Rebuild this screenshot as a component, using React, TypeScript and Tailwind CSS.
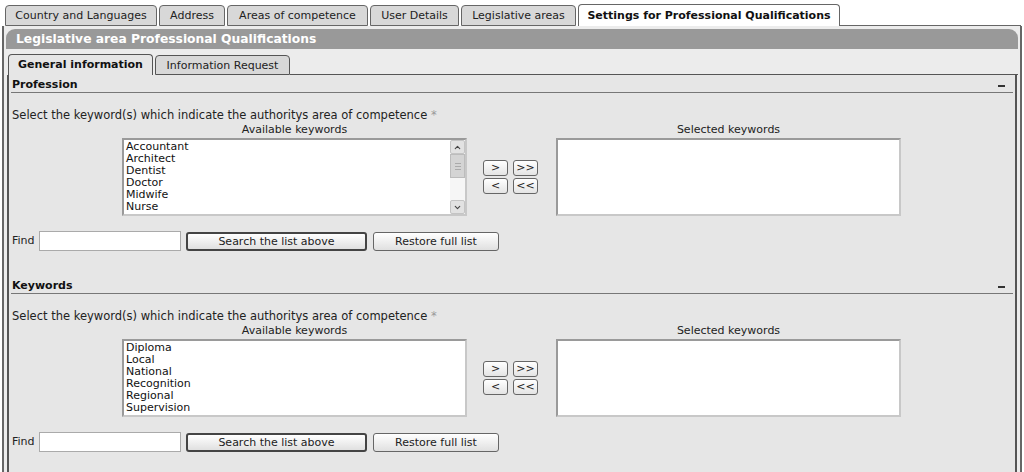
import React from 'react';
import { ChevronUp, ChevronDown } from 'lucide-react';

const topTabs = [
  { label: 'Country and Languages', w: 'w-[152px]' },
  { label: 'Address', w: 'w-[66px]' },
  { label: 'Areas of competence', w: 'w-[141px]' },
  { label: 'User Details', w: 'w-[89px]' },
  { label: 'Legislative areas', w: 'w-[115px]' },
];

function SmallButton({ children }: { children: React.ReactNode }) {
  return (
    <div className="w-[25px] h-[16px] border border-[#666] rounded-[3px] bg-gradient-to-b from-white to-[#e4e4e4] text-[11px] leading-[14px] text-center text-[#222]">
      {children}
    </div>
  );
}

function ListBox({ items, scroll }: { items: string[]; scroll?: boolean }) {
  return (
    <div className="w-[345px] h-[78px] border-2 border-[#9a9a9a] border-r-[#c8c8c8] border-b-[#c8c8c8] bg-white flex">
      <div className="flex-1 pl-[2px] pt-[1px] text-[11px] leading-[12px] text-[#111]">
        {items.map((i) => (
          <div key={i}>{i}</div>
        ))}
      </div>
      {scroll && (
        <div className="w-[15px] flex flex-col bg-[#f6f6f6]">
          <div className="h-[14px] bg-[#e2e2e2] border border-[#c4c4c4] rounded-[2px] flex items-center justify-center text-[#444]">
            <ChevronUp size={9} strokeWidth={3} />
          </div>
          <div className="h-[24px] bg-[#d4d4d4] border border-[#bcbcbc] flex flex-col items-center justify-center gap-[2px]">
            <div className="w-[6px] h-px bg-[#aaa]" />
            <div className="w-[6px] h-px bg-[#aaa]" />
            <div className="w-[6px] h-px bg-[#aaa]" />
          </div>
          <div className="flex-1" />
          <div className="h-[14px] bg-[#e2e2e2] border border-[#c4c4c4] rounded-[2px] flex items-center justify-center text-[#444]">
            <ChevronDown size={9} strokeWidth={3} />
          </div>
        </div>
      )}
    </div>
  );
}

function Section({ title, items, scroll }: { title: string; items: string[]; scroll?: boolean }) {
  return (
    <div>
      <div className="flex justify-between items-center h-[14px] border-b border-[#777] mx-[2px] pl-[1px] pr-[8px] font-bold text-[11px] text-[#111]">
        <span>{title}</span>
        <div className="w-[7px] h-[2px] bg-[#333]" />
      </div>
      <div className="pl-[3px] mt-[15px] h-[14px] text-[11.5px] leading-[14px] text-[#222]">
        Select the keyword(s) which indicate the authoritys area of competence <span className="text-[#999]">*</span>
      </div>
      <div className="flex pl-[113px] mt-px">
        <div className="flex flex-col w-[345px]">
          <div className="h-[15px] text-center text-[11px] leading-[14px] text-[#222]">Available keywords</div>
          <ListBox items={items} scroll={scroll} />
        </div>
        <div className="flex flex-col justify-center gap-[2px] ml-[16px] mt-[15px] w-[56px]">
          <div className="flex gap-[5px]">
            <SmallButton>&gt;</SmallButton>
            <SmallButton>&gt;&gt;</SmallButton>
          </div>
          <div className="flex gap-[5px]">
            <SmallButton>&lt;</SmallButton>
            <SmallButton>&lt;&lt;</SmallButton>
          </div>
        </div>
        <div className="flex flex-col w-[345px] ml-[17px]">
          <div className="h-[15px] text-center text-[11px] leading-[14px] text-[#222]">Selected keywords</div>
          <ListBox items={[]} />
        </div>
      </div>
      <div className="flex items-center mt-[15px] pl-[3px] h-[20px] text-[11px] text-[#222]">
        <span className="w-[27px]">Find</span>
        <div className="w-[142px] h-[20px] bg-white border border-[#aaa]" />
        <div className="ml-[5px] w-[181px] h-[19px] border-2 border-[#444] rounded-[3px] bg-gradient-to-b from-white to-[#e0e0e0] text-center leading-[15px]">
          Search the list above
        </div>
        <div className="ml-[6px] w-[126px] h-[19px] border border-[#666] rounded-[3px] bg-gradient-to-b from-white to-[#e0e0e0] text-center leading-[17px]">
          Restore full list
        </div>
      </div>
    </div>
  );
}

export default function App() {
  return (
    <div className="w-[1024px] h-[472px] bg-white overflow-hidden text-[#222]" style={{ fontFamily: '"DejaVu Sans", Verdana, sans-serif' }}>
      <div className="flex items-end pt-[4px] pl-[5px] pr-[3px]">
        {topTabs.map((t) => (
          <div
            key={t.label}
            className={`${t.w} h-[21px] mr-[2px] border border-[#666] rounded-t-[4px] bg-[#d8d8d8] text-[11px] leading-[20px] text-center whitespace-nowrap text-[#222]`}
          >
            {t.label}
          </div>
        ))}
        <div className="w-[262px] h-[22px] border border-b-0 border-[#666] rounded-t-[4px] bg-white text-[11px] leading-[21px] font-bold text-center whitespace-nowrap text-[#111]">
          Settings for Professional Qualifications
        </div>
        <div className="flex-1 h-px bg-[#666]" />
      </div>
      <div className="mx-[2px] h-[460px] border-l-2 border-r-2 border-[#666] bg-[#ececec] pt-[3px] px-[2px]">
        <div className="h-[20px] bg-[#999] rounded-t-[9px] pl-[10px] text-white font-bold text-[12.3px] leading-[20px]">
          Legislative area Professional Qualifications
        </div>
        <div className="flex items-end mt-[5px] pl-[2px]">
          <div className="w-[145px] h-[21px] border border-b-0 border-[#555] rounded-t-[4px] bg-[#e6e6e6] text-[11px] leading-[20px] font-bold text-center text-[#111]">
            General information
          </div>
          <div className="w-[135px] h-[20px] ml-[2px] border border-[#555] rounded-t-[4px] bg-[#d8d8d8] text-[11px] leading-[19px] text-center text-[#222]">
            Information Request
          </div>
          <div className="flex-1 h-px bg-[#555]" />
        </div>
        <div className="mx-px h-[420px] border-l-2 border-r-2 border-[#555] bg-[#e6e6e6] pt-[4px]">
          <Section title="Profession" items={['Accountant', 'Architect', 'Dentist', 'Doctor', 'Midwife', 'Nurse']} scroll />
          <div className="h-[29px]" />
          <Section title="Keywords" items={['Diploma', 'Local', 'National', 'Recognition', 'Regional', 'Supervision']} />
        </div>
      </div>
    </div>
  );
}
